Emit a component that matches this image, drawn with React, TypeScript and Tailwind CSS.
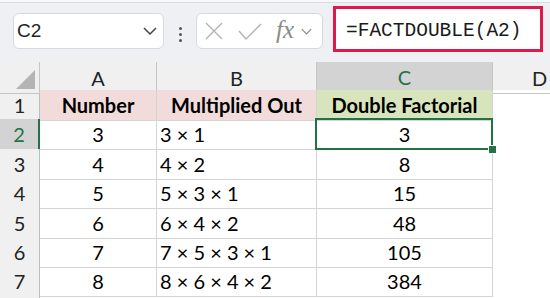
import React from "react";

const rows = [
  { n: "2", a: "3", b: "3 × 1", c: "3", h: "h-[30px]" },
  { n: "3", a: "4", b: "4 × 2", c: "8", h: "h-[29px]" },
  { n: "4", a: "5", b: "5 × 3 × 1", c: "15", h: "h-[30px]" },
  { n: "5", a: "6", b: "6 × 4 × 2", c: "48", h: "h-[29px]" },
  { n: "6", a: "7", b: "7 × 5 × 3 × 1", c: "105", h: "h-[29px]" },
  { n: "7", a: "8", b: "8 × 6 × 4 × 2", c: "384", h: "h-[30px]" },
];

const cols = "grid grid-cols-[40px_117px_160px_176px_1fr]";
const cellFont = "font-['Lato',sans-serif] text-[20px] text-black";

function Chevron({ className }: { className: string }) {
  return (
    <svg viewBox="0 0 14 8" className={className} fill="none" stroke="currentColor" strokeWidth="1.5">
      <path d="M1 1l6 6 6-6" />
    </svg>
  );
}

function Toolbar() {
  return (
    <div className="h-[62px] bg-[#eef0f3] flex flex-col">
      <div className="h-[3px] bg-[#f7f8fa] border-b border-[#d9dce1]" />
      <div className="flex items-start">
        <div className="mt-[10px] ml-[13px] w-[151px] h-[36px] bg-white rounded-[6px] border border-[#d6d9de] flex items-center justify-between pl-[3px] pr-[6px]">
          <span className="font-['Liberation_Sans',sans-serif] text-[19px] text-[#1f1f1f]">C2</span>
          <Chevron className="w-[14px] h-[8px] text-[#444]" />
        </div>
        <div className="mt-[24px] ml-[15px] flex flex-col gap-[3px]">
          <span className="w-[3px] h-[3px] bg-[#555] rounded-full" />
          <span className="w-[3px] h-[3px] bg-[#555] rounded-full" />
          <span className="w-[3px] h-[3px] bg-[#555] rounded-full" />
        </div>
        <div className="mt-[10px] ml-[14px] w-[127px] h-[36px] bg-white rounded-[6px] border border-[#d6d9de] flex items-center pl-[8px]">
          <svg viewBox="0 0 18 18" className="w-[18px] h-[18px] text-[#b3b3b3]" fill="none" stroke="currentColor" strokeWidth="1.4">
            <path d="M1 1l16 16M17 1L1 17" />
          </svg>
          <svg viewBox="0 0 24 17" className="ml-[15px] w-[24px] h-[17px] text-[#b3b3b3]" fill="none" stroke="currentColor" strokeWidth="1.4">
            <path d="M1 8l7 8L23 1" />
          </svg>
          <span className="ml-[14px] font-['Liberation_Serif',serif] italic text-[25px] leading-none text-[#8a8a8a] -mt-[4px]">
            fx
          </span>
          <Chevron className="ml-[7px] w-[11px] h-[7px] text-[#8a8a8a]" />
        </div>
        <div className="mt-[3px] ml-[10px] w-[210px] h-[46px] bg-white border-[3.5px] border-[#e0194b] flex items-center pl-[10px] pt-[6px]">
          <span className="font-['Liberation_Mono',monospace] text-[19.5px] leading-none text-[#1a1a1a]">
            =FACTDOUBLE(A2)
          </span>
        </div>
      </div>
    </div>
  );
}

function ColumnHeaders() {
  return (
    <div className={`${cols} h-[28px] bg-[#f0f0f0] font-['Lato',sans-serif] text-[20px] text-[#222]`}>
      <div className="relative border-r border-b border-[#c6c6c6]">
        <svg viewBox="0 0 19 19" className="absolute right-[4px] bottom-[4px] w-[19px] h-[19px]">
          <path d="M19 0V19H0Z" fill="#b4b4b4" />
        </svg>
      </div>
      <div className="flex items-center justify-center border-r border-b border-[#c6c6c6]">A</div>
      <div className="flex items-center justify-center border-r border-b border-[#c6c6c6]">B</div>
      <div className="flex items-center justify-center bg-[#d3d3d3] border-r border-[#c6c6c6] border-b-2 border-b-[#217346] text-[#217346]">
        C
      </div>
      <div className="flex items-center border-b border-[#c6c6c6] pl-[39px]">D</div>
    </div>
  );
}

export default function App() {
  return (
    <div className="w-[550px] h-[298px] overflow-hidden bg-white">
      <Toolbar />
      <ColumnHeaders />
      <div className={`${cols} h-[29px] ${cellFont}`}>
        <div className="flex items-center justify-center bg-[#f0f0f0] border-r border-r-[#bcbcbc] border-b border-b-[#d4d4d4] text-[#222]">
          1
        </div>
        <div className="flex items-center justify-center bg-[#f2dcdb] border-r border-b border-[#d4d4d4] font-bold">
          Number
        </div>
        <div className="flex items-center justify-center bg-[#f2dcdb] border-r border-b border-[#d4d4d4] font-bold">
          Multiplied Out
        </div>
        <div className="flex items-center justify-center bg-[#d8e4bc] border-r border-b border-[#d4d4d4] font-bold">
          Double Factorial
        </div>
        <div />
      </div>
      {rows.map((r, i) => (
        <div key={r.n} className={`${cols} ${r.h} ${cellFont}`}>
          {i === 0 ? (
            <div className="flex items-center justify-center bg-[#d3d3d3] border-r-2 border-r-[#217346] border-b border-b-[#d4d4d4] text-[#217346]">
              {r.n}
            </div>
          ) : (
            <div className="flex items-center justify-center bg-[#f0f0f0] border-r border-r-[#bcbcbc] border-b border-b-[#d4d4d4] text-[#222]">
              {r.n}
            </div>
          )}
          <div className="flex items-center justify-center border-r border-b border-[#d4d4d4]">{r.a}</div>
          <div className="flex items-center pl-[3px] border-r border-b border-[#d4d4d4]">{r.b}</div>
          <div className="relative flex items-center justify-center border-r border-b border-[#d4d4d4]">
            {r.c}
            {i === 0 && (
              <>
                <div className="absolute z-10 -left-[2px] -top-[1px] -right-[1px] -bottom-[1px] border-2 border-[#217346]" />
                <div className="absolute z-10 -right-[5px] -bottom-[5px] w-[9px] h-[9px] bg-[#217346] border border-white" />
              </>
            )}
          </div>
          <div />
        </div>
      ))}
      <div className={`${cols} h-[29px]`}>
        <div className="bg-[#f0f0f0] border-r border-[#bcbcbc]" />
      </div>
    </div>
  );
}
